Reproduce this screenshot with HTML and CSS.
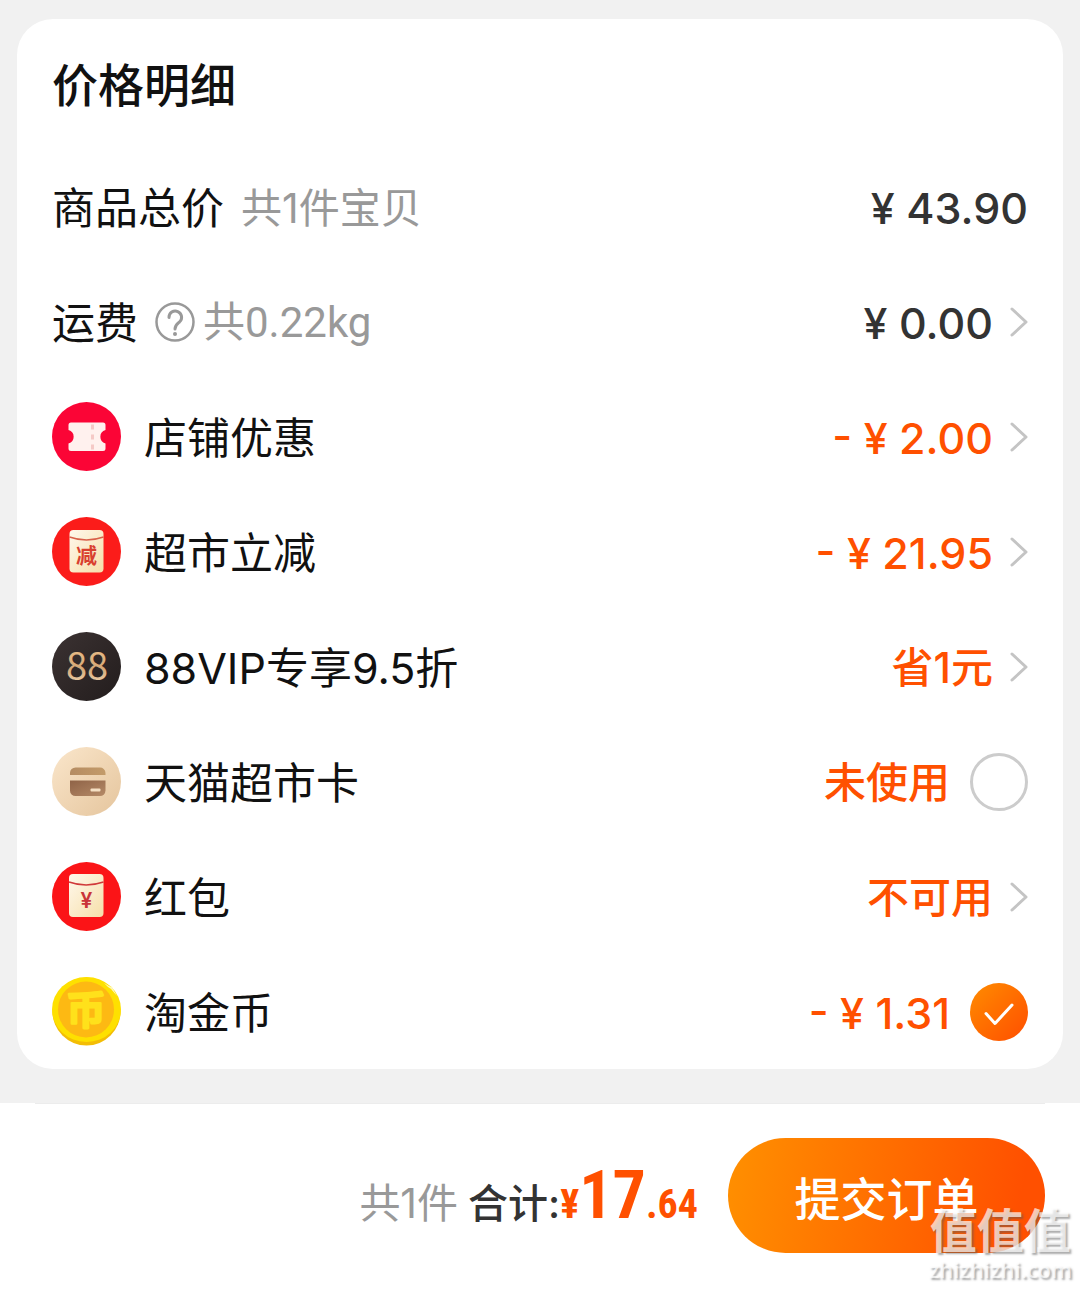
FILE: index.html
```html
<!DOCTYPE html>
<html lang="zh-CN">
<head>
<meta charset="utf-8">
<meta name="viewport" content="width=device-width, initial-scale=1">
<title>确认订单</title>
<link rel="stylesheet" href="styles.css">
</head>
<body>
<svg class="defs" width="0" height="0" aria-hidden="true">
  <defs>
    <linearGradient id="paper" x1="0" y1="0" x2="1" y2="1">
      <stop offset="0" stop-color="#fff8ec"/><stop offset="1" stop-color="#f6dfa9"/>
    </linearGradient>
    <linearGradient id="gold" x1="0" y1="0" x2="0" y2="1">
      <stop offset="0" stop-color="#f3c88f"/><stop offset=".6" stop-color="#d5a878"/><stop offset="1" stop-color="#fbe6c8"/>
    </linearGradient>
    <linearGradient id="dark" x1="0" y1="0" x2="1" y2="1">
      <stop offset="0" stop-color="#3b3232"/><stop offset="1" stop-color="#231d1d"/>
    </linearGradient>
    <linearGradient id="cream" x1="0" y1="0" x2="1" y2="1">
      <stop offset="0" stop-color="#fae6cb"/><stop offset="1" stop-color="#e5c59d"/>
    </linearGradient>
    <linearGradient id="card-top" x1="0" y1="0" x2="1" y2="0">
      <stop offset="0" stop-color="#b58c62"/><stop offset="1" stop-color="#c39b6a"/>
    </linearGradient>
    <linearGradient id="card-base" x1="0" y1="0" x2="1" y2="1">
      <stop offset="0" stop-color="#8f6347"/><stop offset="1" stop-color="#b58a67"/>
    </linearGradient>
    <symbol id="chevron" viewBox="0 0 18 30">
      <path d="M2 2 16 15 2 28" fill="none" stroke="#c4c4c4" stroke-width="3" stroke-linecap="round" stroke-linejoin="round"/>
    </symbol>
  </defs>
</svg>

<main class="page">
  <section class="card" aria-labelledby="card-title">
    <h1 class="card-title" id="card-title">价格明细</h1>
    <ul class="rows">
      <li class="row">
        <span class="label">商品总价</span>
        <span class="note">共1件宝贝</span>
        <span class="value value-plain"><span class="amount">¥ 43.90</span></span>
      </li>
      <li class="row">
        <span class="label">运费</span>
        <button class="help" type="button" aria-label="运费说明">
          <svg width="40" height="40" viewBox="0 0 40 40" fill="none" stroke="#999" stroke-width="3" stroke-linecap="round">
            <circle cx="20" cy="20" r="18.500" stroke-width="2.500"/>
            <path d="M14 15.500a6.300 6.300 0 1 1 10.500 4.500C21.500 22.500 20 23.500 20 27"/>
            <circle cx="20" cy="32" r="2" fill="#999" stroke="none"/>
          </svg>
        </button>
        <span class="note note-weight">共0.22kg</span>
        <button class="value value-link value-plain" type="button"><span class="amount">¥ 0.00</span><svg class="chevron"><use href="#chevron"/></svg></button>
      </li>
      <li class="row">
        <svg class="icon" viewBox="0 0 69 69" aria-hidden="true">
          <circle cx="34.500" cy="34.500" r="34.500" fill="#fb0536"/>
          <path d="M19 20.500h32a2.500 2.500 0 0 1 2.500 2.500v5a7 7 0 0 0 0 13.500v5a2.500 2.500 0 0 1-2.500 2.500H19a2.500 2.500 0 0 1-2.500-2.500v-5a7 7 0 0 0 0-13.500v-5a2.500 2.500 0 0 1 2.500-2.500z" fill="#fff1ee"/>
          <path d="M40.500 22.500v25" stroke="#f5c9c6" stroke-width="3" stroke-dasharray="5 5"/>
        </svg>
        <span class="label">店铺优惠</span>
        <button class="value value-link" type="button"><span class="amount">- ¥ 2.00</span><svg class="chevron"><use href="#chevron"/></svg></button>
      </li>
      <li class="row">
        <svg class="icon" viewBox="0 0 69 69" aria-hidden="true">
          <circle cx="34.500" cy="34.500" r="34.500" fill="#fb1c1a"/>
          <rect x="17.500" y="13" width="34" height="42.500" rx="4" fill="url(#paper)"/>
          <path d="M17.500 20q17 6 34 0" fill="none" stroke="#d8604a" stroke-width="1.500"/>
          <text class="icon-text icon-cut" x="34.500" y="46">减</text>
        </svg>
        <span class="label">超市立减</span>
        <button class="value value-link" type="button"><span class="amount">- ¥ 21.95</span><svg class="chevron"><use href="#chevron"/></svg></button>
      </li>
      <li class="row">
        <svg class="icon" viewBox="0 0 69 69" aria-hidden="true">
          <circle cx="34.500" cy="34.500" r="34.500" fill="url(#dark)"/>
          <text class="icon-text icon-vip" x="35" y="48">88</text>
        </svg>
        <span class="label">88VIP专享9.5折</span>
        <button class="value value-link" type="button"><span class="amount amount-words">省1元</span><svg class="chevron"><use href="#chevron"/></svg></button>
      </li>
      <li class="row">
        <svg class="icon" viewBox="0 0 69 69" aria-hidden="true">
          <circle cx="34.500" cy="34.500" r="34.500" fill="url(#cream)"/>
          <path d="M18 28v-2a5.500 5.500 0 0 1 5.500-5.500h24A5.500 5.500 0 0 1 53.500 26v2z" fill="url(#card-top)"/>
          <path d="M18 33.500h35.500v10a5.500 5.500 0 0 1-5.500 5.500H23.500a5.500 5.500 0 0 1-5.500-5.500z" fill="url(#card-base)"/>
          <rect x="38.500" y="41.500" width="10" height="3" rx="1" fill="#f5e0c4"/>
        </svg>
        <label class="label" for="use-card">天猫超市卡</label>
        <span class="value value-check"><span class="amount amount-words">未使用</span>
          <span class="tick"><input class="tick-box" type="checkbox" id="use-card"></span>
        </span>
      </li>
      <li class="row">
        <svg class="icon" viewBox="0 0 69 69" aria-hidden="true">
          <circle cx="34.500" cy="34.500" r="34.500" fill="#fb1417"/>
          <rect x="17" y="12" width="34.500" height="43" rx="4" fill="url(#paper)"/>
          <path d="M17 20q17 6 34.500 0" fill="none" stroke="#d0393a" stroke-width="1.500"/>
          <text class="icon-text icon-yuan" x="34.500" y="46">¥</text>
        </svg>
        <span class="label">红包</span>
        <button class="value value-link" type="button"><span class="amount amount-words">不可用</span><svg class="chevron"><use href="#chevron"/></svg></button>
      </li>
      <li class="row">
        <svg class="icon" viewBox="0 0 69 69" aria-hidden="true">
          <circle cx="34.500" cy="34.500" r="34" fill="#f3bd05"/>
          <ellipse cx="34.500" cy="32.500" rx="34.500" ry="32.500" fill="#fee000"/>
          <circle cx="34" cy="32.500" r="28" fill="#fdb913"/>
          <text class="icon-text icon-coin" x="34" y="47">币</text>
          <path d="M52 6l5 3 3 1 5 9-6-7-3-2z" fill="#fff8b8"/>
        </svg>
        <label class="label" for="use-coin">淘金币</label>
        <span class="value value-check"><span class="amount">- ¥ 1.31</span>
          <span class="tick">
            <input class="tick-box" type="checkbox" id="use-coin" checked>
            <svg class="tick-mark" viewBox="0 0 58 58" aria-hidden="true"><path d="M16 30.500 25 40.500 42 22" fill="none" stroke="#fff" stroke-width="3" stroke-linecap="round" stroke-linejoin="round"/></svg>
          </span>
        </span>
      </li>
    </ul>
  </section>
</main>

<footer class="bar">
  <p class="total">
    <span class="count">共1件</span>
    <span class="sum">合计:</span><strong class="price"><span class="price-small">¥</span><span class="price-big">17</span><span class="price-small">.64</span></strong>
  </p>
  <button class="submit" type="button">提交订单</button>
  <div class="watermark">
    <span class="watermark-name">值值值</span>
    <span class="watermark-site">zhizhizhi.com</span>
  </div>
</footer>
</body>
</html>
```
FILE: styles.css
```css
* {
  box-sizing: border-box;
}

body {
  margin: 0;
  min-height: 100vh;
  display: flex;
  flex-direction: column;
  background: #fff;
  color: #111;
  font-family: Inter, "Noto Sans CJK SC", sans-serif;
}

button {
  margin: 0;
  padding: 0;
  border: 0;
  background: none;
  font-family: inherit;
  cursor: pointer;
}

.defs {
  position: absolute;
}

.page {
  padding: 19px 17px 34px;
  background: #f1f1f1;
}

.card {
  padding: 0 35px;
  border-radius: 36px;
  background: #fff;
}

.card-title {
  margin: 0;
  padding: 34px 0 32px;
  font-size: 46px;
  font-weight: 500;
  line-height: 64px;
}

.rows {
  margin: 0;
  padding: 0;
  list-style: none;
}

.row {
  display: flex;
  align-items: center;
  height: 115px;
}

.icon {
  flex: none;
  width: 69px;
  height: 69px;
  margin-right: 23px;
}

.icon-text {
  font-family: Inter, "Noto Sans CJK SC", sans-serif;
  text-anchor: middle;
}

.icon-cut {
  fill: #d9402f;
  font-size: 21px;
  font-weight: 700;
}

.icon-vip {
  fill: url(#gold);
  font-family: "Noto Sans CJK SC", sans-serif;
  font-size: 38px;
}

.icon-yuan {
  fill: #c93439;
  font-size: 21px;
  font-weight: 600;
}

.icon-coin {
  fill: #ffe11b;
  stroke: #ffe11b;
  stroke-width: 3px;
  stroke-linejoin: round;
  font-size: 39px;
  font-weight: 500;
}

.label,
.note,
.amount {
  padding-top: 3px;
  line-height: 60px;
}

.label {
  font-size: 43px;
}

.note {
  margin-left: 17px;
  color: #999;
  font-size: 41px;
}

.help {
  display: flex;
  margin-left: 17px;
}

.note-weight {
  margin-left: 8px;
  font-family: Roboto, "Noto Sans CJK SC", sans-serif;
  font-size: 42px;
}

.value {
  display: flex;
  align-items: center;
  margin-left: auto;
  color: #ff5000;
  font-size: 43px;
  font-weight: 500;
  white-space: nowrap;
}

.value-plain {
  color: #333;
}

.value-link {
  gap: 17px;
}

.value-check {
  gap: 20px;
}

.amount-words {
  font-size: 42px;
}

.chevron {
  width: 18px;
  height: 30px;
}

.tick {
  display: grid;
}

.tick-box,
.tick-mark {
  grid-area: 1 / 1;
  width: 58px;
  height: 58px;
  margin: 0;
}

.tick-box {
  appearance: none;
  border: 3px solid #ccc;
  border-radius: 50%;
}

.tick-box:checked {
  border: 0;
  background: linear-gradient(135deg, #ff8c00, #ff4e00);
}

.tick-mark {
  pointer-events: none;
}

.bar {
  position: relative;
  display: flex;
  flex: 1;
  align-items: flex-start;
  justify-content: flex-end;
  gap: 30px;
  margin: 0 35px;
  padding: 34px 0 36px;
  border-top: 1px solid #ececec;
}

.total {
  display: flex;
  align-items: baseline;
  margin: 0;
  padding-top: 16px;
  font-size: 41px;
  line-height: 84px;
}

.count {
  margin-right: 10px;
  color: #999;
}

.sum {
  color: #333;
  font-size: 40px;
  font-weight: 500;
}

.price {
  color: #ff5000;
  font-family: "Roboto Condensed", Roboto, sans-serif;
  font-weight: 700;
}

.price-small {
  font-size: 40px;
}

.price-big {
  font-size: 66px;
}

.submit {
  width: 317px;
  height: 115px;
  border-radius: 58px;
  background: linear-gradient(100deg, #ff9000, #ff5000 90%);
  color: #fff;
  font-size: 46px;
  font-weight: 500;
}

.watermark {
  position: absolute;
  top: 102px;
  right: -27px;
  display: flex;
  flex-direction: column;
  align-items: center;
  color: rgba(255, 255, 255, 0.7);
  text-shadow: 2px 2px 2px rgba(90, 90, 90, 0.5);
  pointer-events: none;
}

.watermark-name {
  font-size: 47px;
  font-weight: 700;
  line-height: 50px;
}

.watermark-site {
  font-family: "Open Sans", sans-serif;
  font-size: 22px;
  font-weight: 600;
  line-height: 26px;
}
```
